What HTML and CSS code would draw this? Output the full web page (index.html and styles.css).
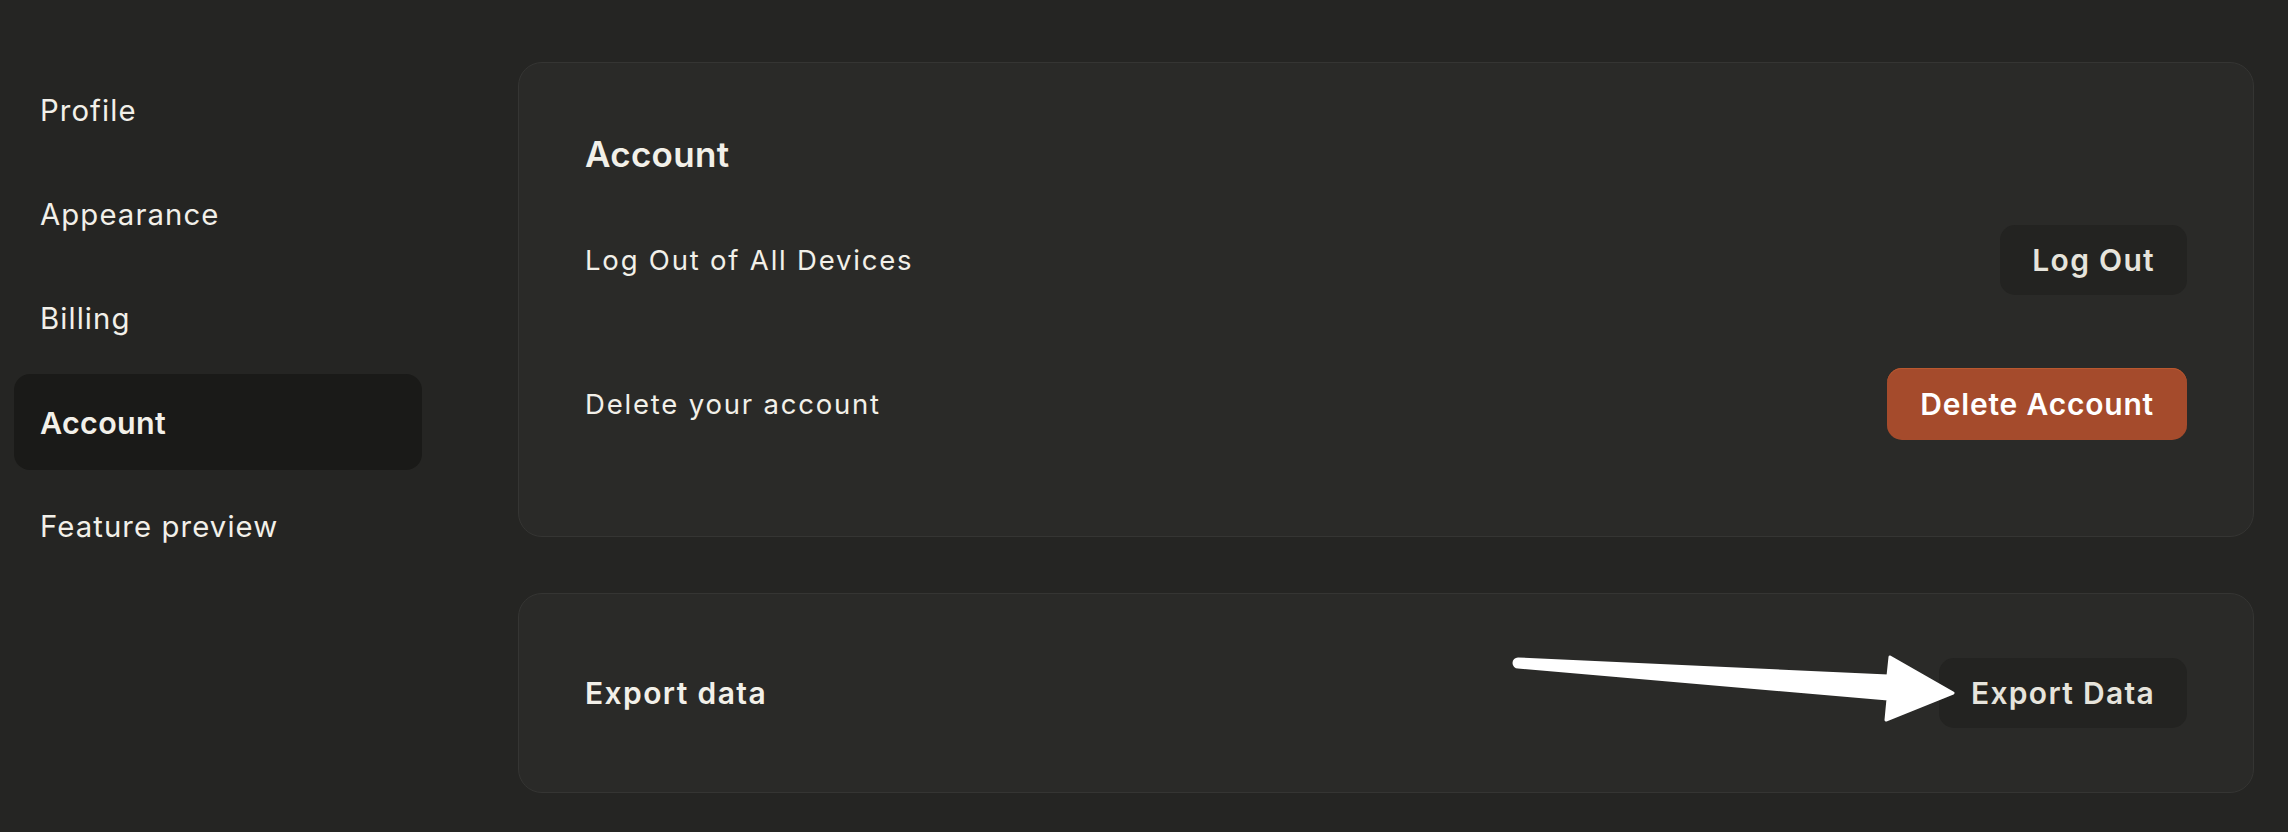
FILE: index.html
```html
<!DOCTYPE html>
<html lang="en">
<head>
<meta charset="utf-8">
<title>Settings - Account</title>
<link rel="stylesheet" href="styles.css">
</head>
<body>
<div class="page">
  <nav class="sidebar">
    <a class="nav-item">Profile</a>
    <a class="nav-item">Appearance</a>
    <a class="nav-item">Billing</a>
    <a class="nav-item active">Account</a>
    <a class="nav-item">Feature preview</a>
  </nav>
  <main class="main">
    <section class="panel panel-account">
      <h2 class="panel-title">Account</h2>
      <div class="row">
        <span class="row-label">Log Out of All Devices</span>
        <button class="btn btn-dark btn-logout">Log Out</button>
      </div>
      <div class="row">
        <span class="row-label">Delete your account</span>
        <button class="btn btn-danger">Delete Account</button>
      </div>
    </section>
    <section class="panel panel-export">
      <span class="row-label strong">Export data</span>
      <button class="btn btn-dark">Export Data</button>
    </section>
  </main>
</div>
<svg class="annotation" width="2288" height="832" viewBox="0 0 2288 832" aria-hidden="true">
  <path d="M1518,659 L1888,676 L1890,657 L1953,693 L1886,720 L1888,699 L1518,667 A4,4 0 0 1 1518,659 Z" fill="#ffffff" stroke="#ffffff" stroke-width="3" stroke-linejoin="round"/>
</svg>
</body>
</html>
```
FILE: styles.css
```css
* { box-sizing: border-box; }
html, body { margin: 0; padding: 0; }
body {
  width: 2288px;
  height: 832px;
  overflow: hidden;
  background: #252523;
  font-family: "Inter", "Liberation Sans", sans-serif;
  color: #f2f0e9;
  position: relative;
}
.page {
  display: flex;
  padding: 62px 34px 0 14px;
  gap: 96px;
}
.sidebar {
  width: 408px;
  flex: none;
  display: flex;
  flex-direction: column;
  gap: 8px;
}
.nav-item {
  display: flex;
  align-items: center;
  height: 96px;
  padding-left: 26px;
  border-radius: 16px;
  font-size: 29.3px;
  letter-spacing: 1.1px;
  color: #f2f0e9;
}
.nav-item.active {
  background: #1a1a18;
  font-weight: 600;
  font-size: 30.5px;
  letter-spacing: 0.3px;
}
.main {
  flex: 1;
  display: flex;
  flex-direction: column;
  gap: 56px;
}
.panel {
  background: #2a2a28;
  border: 1px solid #353533;
  border-radius: 24px;
  padding: 0 66px;
}
.panel-account {
  padding-top: 63px;
  padding-bottom: 60px;
}
.panel-title {
  margin: 0;
  height: 62px;
  line-height: 56px;
  font-size: 35px;
  font-weight: 600;
  letter-spacing: 0.3px;
  color: #f2f0e9;
}
.row {
  height: 144px;
  display: flex;
  align-items: center;
  justify-content: space-between;
}
.row-label {
  font-size: 27.5px;
  letter-spacing: 1.8px;
  color: #f2f0e9;
}
.row-label.strong {
  font-size: 30px;
  font-weight: 600;
  letter-spacing: 1.4px;
}
.panel-export {
  height: 200px;
  display: flex;
  align-items: center;
  justify-content: space-between;
}
.btn {
  font-family: inherit;
  font-size: 30px;
  font-weight: 600;
  letter-spacing: 1.3px;
  border: none;
  border-radius: 15px;
  padding: 0 32px;
  height: 70px;
  cursor: pointer;
}
.btn-dark {
  background: #232321;
  color: #e6e4dc;
}
.btn-danger {
  height: 72px;
  padding: 0 33px;
  letter-spacing: 0.8px;
  background: #a54b2c;
  color: #ffffff;
  box-shadow: inset 0 1px 0 #b9582f;
}
.annotation {
  position: absolute;
  left: 0;
  top: 0;
  pointer-events: none;
}
```
